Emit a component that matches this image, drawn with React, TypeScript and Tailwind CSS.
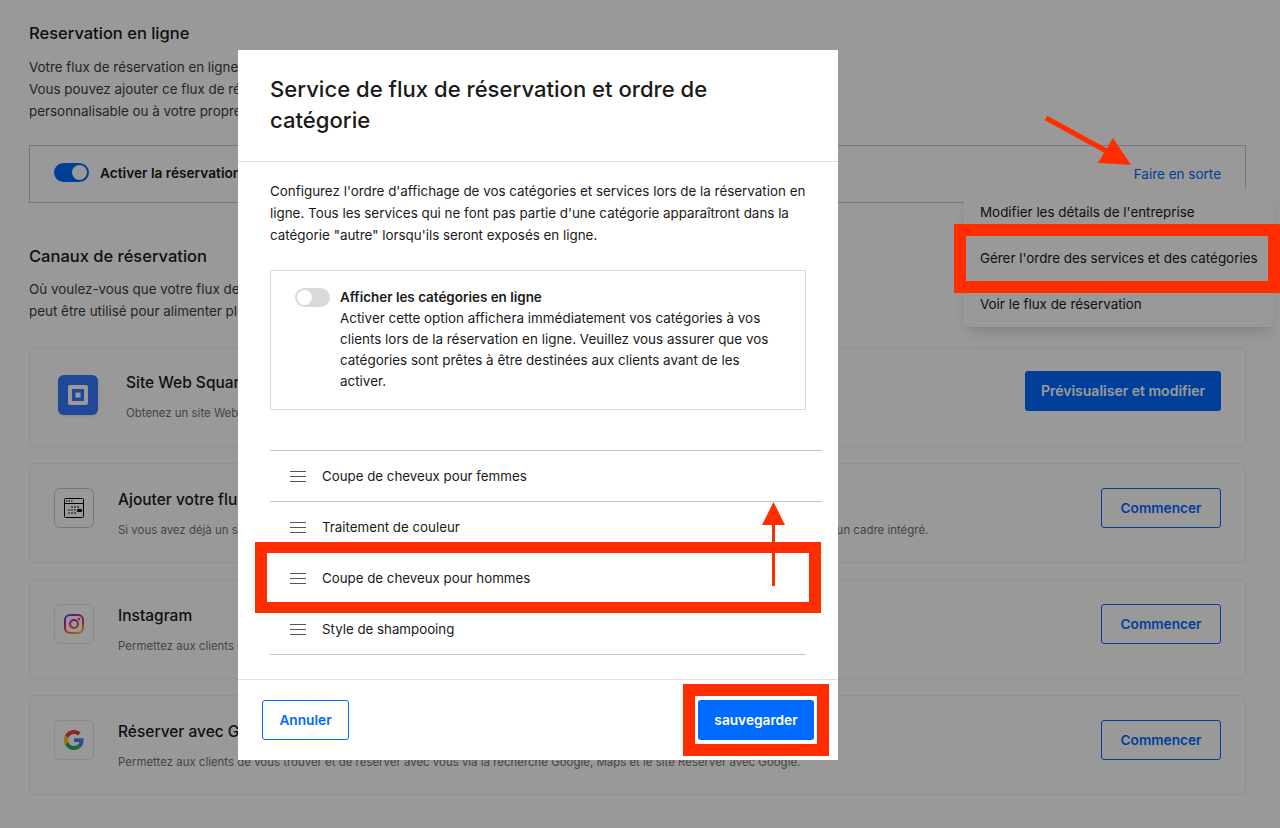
const font = { fontFamily: 'Inter, sans-serif' };

function SquareLogo() {
  return (
    <div className="w-10 h-10 mt-1 rounded-md bg-[#3478ff] flex items-center justify-center shadow-sm shrink-0">
      <svg width="20" height="20" viewBox="0 0 20 20">
        <path fillRule="evenodd" d="M2 0h16a2 2 0 0 1 2 2v16a2 2 0 0 1-2 2H2a2 2 0 0 1-2-2V2a2 2 0 0 1 2-2zM5 4A1 1 0 0 0 4 5v10a1 1 0 0 0 1 1h10a1 1 0 0 0 1-1V5a1 1 0 0 0-1-1z" fill="#ffffff" />
        <rect x="7.500" y="7.500" width="5" height="5" rx="0.5" fill="#ffffff" />
      </svg>
    </div>
  );
}

function IconBox({ children, strong }: { children: React.ReactNode; strong?: boolean }) {
  return (
    <div className={`w-10 h-10 rounded-md border bg-white flex items-center justify-center shrink-0 ${strong ? 'border-[#c8c8c8]' : 'border-[#e6e6e6]'}`}>
      {children}
    </div>
  );
}

function EmbedIcon() {
  return (
    <svg width="20" height="20" viewBox="0 0 20 20" fill="none">
      <rect x="0.500" y="0.500" width="19" height="19" rx="1" stroke="#000" />
      <path d="M0.500 5.500h19" stroke="#000" />
      <path d="M2 3h1.500M4.500 3h1.500M7 3h1.500" stroke="#555" strokeWidth="1.500" />
      <path d="M7 9h2M10 9h2M13 9h2M4 12h2M7 12h2M10 12h2M4 15h2M7 15h2M10 15h2" stroke="#666" strokeWidth="1.500" />
      <rect x="13" y="11" width="5" height="3" rx="1" fill="#000" />
    </svg>
  );
}

function InstagramIcon() {
  return (
    <svg width="20" height="20" viewBox="0 0 20 20" fill="none">
      <defs>
        <linearGradient id="ig" gradientUnits="userSpaceOnUse" x1="12" y1="20" x2="4" y2="0">
          <stop offset="0" stopColor="#fcb045" />
          <stop offset="0.300" stopColor="#f0562e" />
          <stop offset="0.650" stopColor="#d6249f" />
          <stop offset="1" stopColor="#5b51d8" />
        </linearGradient>
      </defs>
      <rect x="1" y="1" width="18" height="18" rx="5" stroke="url(#ig)" strokeWidth="2" />
      <circle cx="10" cy="10" r="4" stroke="url(#ig)" strokeWidth="2" />
      <circle cx="15" cy="5" r="1.200" fill="url(#ig)" />
    </svg>
  );
}

function GoogleIcon() {
  return (
    <svg width="20" height="20" viewBox="0 0 48 48">
      <path fill="#EA4335" d="M24 9.500c3.540 0 6.710 1.220 9.210 3.600l6.850-6.850C35.900 2.380 30.470 0 24 0 14.620 0 6.510 5.380 2.560 13.220l7.980 6.190C12.430 13.720 17.740 9.500 24 9.500z" />
      <path fill="#4285F4" d="M46.980 24.550c0-1.570-.15-3.090-.38-4.550H24v9.020h12.940c-.58 2.960-2.260 5.480-4.780 7.180l7.730 6c4.510-4.180 7.090-10.360 7.090-17.650z" />
      <path fill="#FBBC05" d="M10.530 28.590c-.48-1.450-.76-2.990-.76-4.590s.27-3.140.76-4.590l-7.980-6.190C.92 16.460 0 20.120 0 24c0 3.880.92 7.540 2.560 10.780l7.970-6.190z" />
      <path fill="#34A853" d="M24 48c6.480 0 11.930-2.130 15.890-5.810l-7.730-6c-2.150 1.450-4.920 2.300-8.160 2.300-6.260 0-11.570-4.220-13.470-9.910l-7.980 6.190C6.510 42.620 14.620 48 24 48z" />
    </svg>
  );
}

function ChannelCard({ icon, title, desc, action, first }: { icon: React.ReactNode; title: string; desc: string; action: React.ReactNode; first?: boolean }) {
  return (
    <div className={`h-[100px] rounded-md border border-[#f0f0f0] flex justify-between pr-6 ${first ? 'pl-7 pt-[23px]' : 'pl-6 pt-6'}`}>
      <div className="flex items-start">
        {icon}
        <div className={first ? 'ml-7' : 'ml-6'}>
          <div className="text-[15.5px] leading-6 font-medium text-[#1a1a1a]">{title}</div>
          <div className="mt-2 text-[11.45px] leading-5 text-[#737373] whitespace-nowrap">{desc}</div>
        </div>
      </div>
      {action}
    </div>
  );
}

function OutlineButton({ label }: { label: string }) {
  return (
    <button className="w-[120px] h-10 rounded-[3px] border border-[#006aff] bg-white text-[13.7px] font-semibold text-[#006aff] shrink-0">
      {label}
    </button>
  );
}

function DragRow({ label, last }: { label: string; last?: boolean }) {
  return (
    <div className={`flex items-center border-t border-[#c4c4c4] pl-5 ${last ? 'w-[536px] border-b h-[52px]' : 'w-[552px] h-[51px]'}`}>
      <svg width="16" height="11" viewBox="0 0 16 11" stroke="#555" className="shrink-0">
        <path d="M0 .5h16M0 5.500h16M0 10.500h16" />
      </svg>
      <span className="ml-4 mt-[2px] text-[13.3px] text-[#1a1a1a]">{label}</span>
    </div>
  );
}

export default function App() {
  return (
    <div className="relative w-[1280px] h-[828px] overflow-hidden bg-white" style={font}>
      {/* page under the dialog */}
      <div className="pl-[29px] w-[1246px] pt-[21px]">
        <h2 className="text-[16.5px] leading-6 font-medium text-[#1a1a1a]">Reservation en ligne</h2>
        <div className="mt-[11px] text-[13.4px] leading-[22px] text-[#3d3d3d]">
          <p>Votre flux de réservation en ligne vous permet de recevoir des réservations</p>
          <p>Vous pouvez ajouter ce flux de réservation à votre site Web Square</p>
          <p>personnalisable ou à votre propre site Web existant</p>
        </div>
        <div className="mt-[23px] h-[58px] border border-[#c8c8c8] flex items-center justify-between pl-6 pr-6">
          <div className="flex items-center -mt-[2px]">
            <div className="w-[35px] h-[19px] rounded-full bg-[#006aff] flex justify-end items-center pr-[2px]">
              <div className="w-[15px] h-[15px] rounded-full bg-white" />
            </div>
            <span className="ml-[11px] text-[13.7px] font-semibold text-[#1a1a1a]">Activer la réservation</span>
          </div>
          <span className="text-[13.5px] text-[#006aff] mt-[1px]">Faire en sorte</span>
        </div>
        <h2 className="mt-[41px] text-[16.5px] leading-6 font-medium text-[#1a1a1a]">Canaux de réservation</h2>
        <div className="mt-[10px] text-[13.4px] leading-[22px] text-[#3d3d3d]">
          <p>Où voulez-vous que votre flux de réservation apparaisse ?</p>
          <p>peut être utilisé pour alimenter plusieurs canaux</p>
        </div>
        <div className="mt-[25px] flex flex-col gap-4">
          <ChannelCard
            first
            icon={<SquareLogo />}
            title="Site Web Square"
            desc="Obtenez un site Web gratuit avec votre flux de réservation"
            action={
              <button className="w-[196px] h-10 rounded-[3px] bg-[#006aff] text-sm font-semibold text-white shrink-0">
                Prévisualiser et modifier
              </button>
            }
          />
          <ChannelCard
            icon={<IconBox strong><EmbedIcon /></IconBox>}
            title="Ajouter votre flux à votre site"
            desc="Si vous avez déjà un site Web, vous pouvez facilement y ajouter votre flux de réservations en ligne à l'aide d'un lien, d'un bouton, ou un cadre intégré."
            action={<OutlineButton label="Commencer" />}
          />
          <ChannelCard
            icon={<IconBox><InstagramIcon /></IconBox>}
            title="Instagram"
            desc="Permettez aux clients de réserver depuis votre profil Instagram."
            action={<OutlineButton label="Commencer" />}
          />
          <ChannelCard
            icon={<IconBox><GoogleIcon /></IconBox>}
            title="Réserver avec Google"
            desc="Permettez aux clients de vous trouver et de réserver avec vous via la recherche Google, Maps et le site Réserver avec Google."
            action={<OutlineButton label="Commencer" />}
          />
        </div>
      </div>

      {/* dropdown */}
      <div className="absolute left-[964px] top-[189px] w-[309px] h-[138px] rounded bg-white shadow-lg flex flex-col text-[13.4px] text-[#1a1a1a]">
        <div className="h-[46px] pl-4 flex items-center">Modifier les détails de l'entreprise</div>
        <div className="h-[46px] pl-4 flex items-center">Gérer l'ordre des services et des catégories</div>
        <div className="h-[46px] pl-4 flex items-center">Voir le flux de réservation</div>
      </div>

      <div className="absolute inset-0 bg-black/40" />

      {/* dialog */}
      <div className="absolute left-[238px] top-[50px] w-[600px] h-[710px] bg-white flex flex-col">
        <div className="h-[112px] border-b border-[#e0e0e0] pl-8 pr-8 pt-6">
          <h1 className="text-[22.1px] leading-[31px] font-medium text-[#1a1a1a] w-[480px]">Service de flux de réservation et ordre de catégorie</h1>
        </div>
        <div className="flex-1 pl-8">
          <p className="mt-[18px] w-[540px] text-[13.4px] leading-[22px] text-[#1a1a1a]">
            Configurez l'ordre d'affichage de vos catégories et services lors de la réservation en ligne. Tous les services qui ne font pas partie d'une catégorie apparaîtront dans la catégorie "autre" lorsqu'ils seront exposés en ligne.
          </p>
          <div className="mt-[24px] w-[536px] h-[140px] border border-[#d9d9d9] flex pl-6 pr-5 pt-[16px]">
            <div className="w-[35px] h-[19px] mt-[1px] rounded-full bg-[#d9d9d9] flex items-center pl-[2px] shrink-0">
              <div className="w-[15px] h-[15px] rounded-full bg-white" />
            </div>
            <div className="ml-[10px] text-[13.45px] leading-[21px] text-[#1a1a1a]">
              <div className="font-semibold">Afficher les catégories en ligne</div>
              <div>Activer cette option affichera immédiatement vos catégories à vos clients lors de la réservation en ligne. Veuillez vous assurer que vos catégories sont prêtes à être destinées aux clients avant de les activer.</div>
            </div>
          </div>
          <div className="mt-[40px]">
            <DragRow label="Coupe de cheveux pour femmes" />
            <DragRow label="Traitement de couleur" />
            <DragRow label="Coupe de cheveux pour hommes" />
            <DragRow label="Style de shampooing" last />
          </div>
        </div>
        <div className="h-[81px] border-t border-[#e0e0e0] flex items-center justify-between pl-6 pr-6">
          <button className="w-[87px] h-10 rounded-[3px] border border-[#006aff] text-[13.7px] font-semibold text-[#006aff]">Annuler</button>
          <button className="w-[116px] h-10 rounded-[3px] bg-[#006aff] text-[13.7px] font-semibold text-white">sauvegarder</button>
        </div>
      </div>

      {/* red annotations */}
      <div className="absolute left-[954px] top-[224px] w-[326px] h-[69px] border-[12px] border-[#ff2d00]" />
      <div className="absolute left-[255px] top-[542px] w-[566px] h-[71px] border-y-[11px] border-x-[12px] border-[#ff2d00]" />
      <div className="absolute left-[683px] top-[684px] w-[146px] h-[72px] border-[12px] border-[#ff2d00]" />
      <svg className="absolute left-0 top-0" width="1280" height="828" fill="#ff2d00" stroke="#ff2d00">
        <path d="M1046 118L1110 153" strokeWidth="5" />
        <path d="M1113 138L1098 163L1131 165Z" stroke="none" />
        <path d="M773.500 520V586" strokeWidth="3" />
        <path d="M773.500 502L762 525H785Z" stroke="none" />
      </svg>
    </div>
  );
}
